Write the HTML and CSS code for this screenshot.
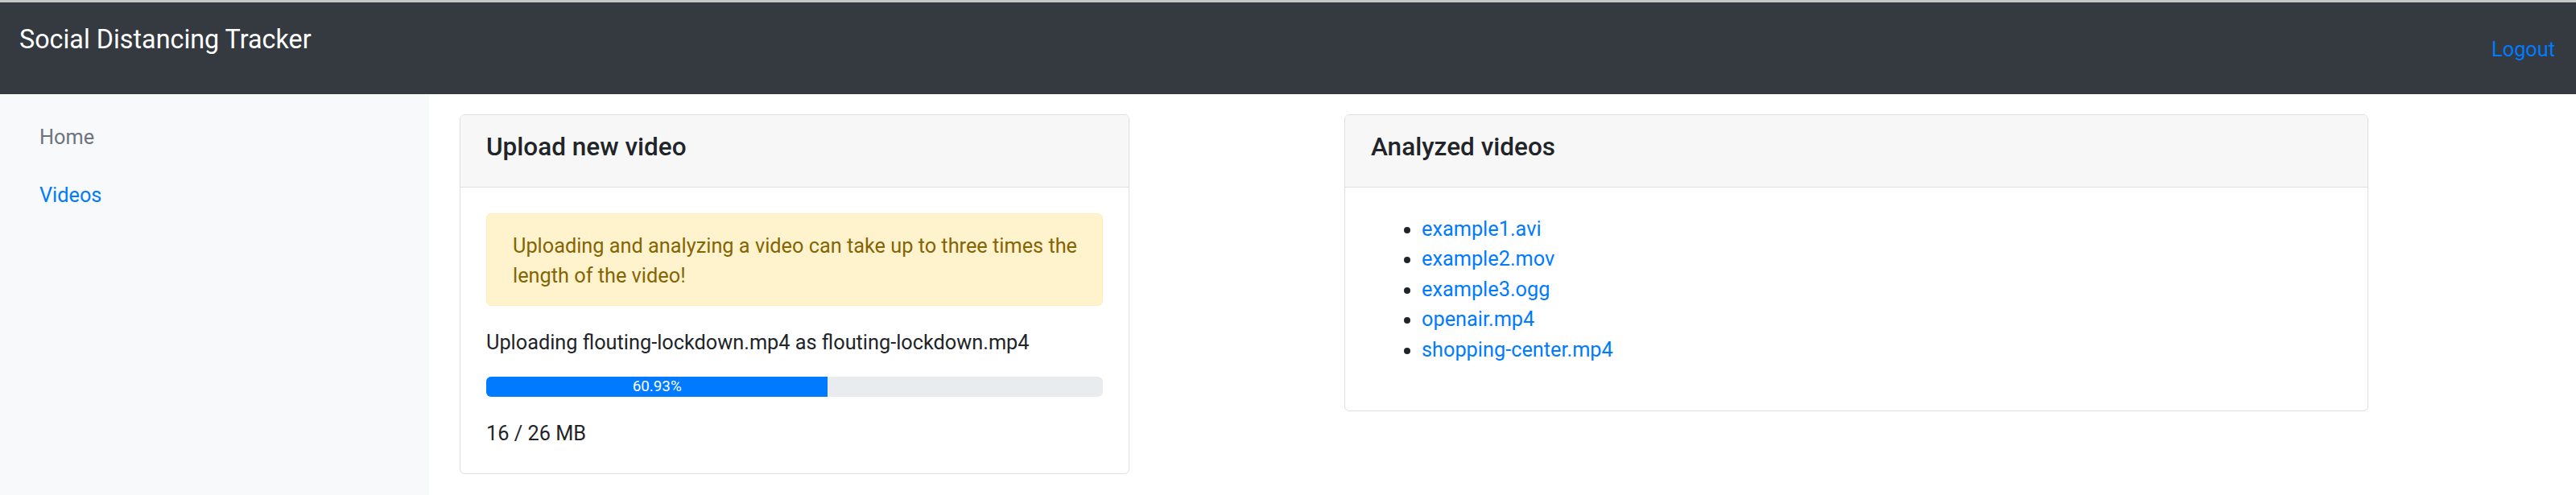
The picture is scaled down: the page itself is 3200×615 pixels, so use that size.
FILE: index.html
```html
<!DOCTYPE html>
<html lang="en">
<head>
<meta charset="utf-8">
<title>Social Distancing Tracker</title>
<link rel="stylesheet" href="styles.css">
</head>
<body>
<div class="topline"></div>
<nav class="navbar">
  <a class="brand" href="#">Social Distancing Tracker</a>
  <a class="logout" href="#">Logout</a>
</nav>
<div class="layout">
  <aside class="sidebar">
    <a class="side-link" href="#">Home</a>
    <a class="side-link active" href="#">Videos</a>
  </aside>
  <main class="main">
    <section class="card card-upload">
      <div class="card-header"><h5 class="card-title">Upload new video</h5></div>
      <div class="card-body">
        <div class="alert">Uploading and analyzing a video can take up to three times the length of the video!</div>
        <p class="status">Uploading flouting-lockdown.mp4 as flouting-lockdown.mp4</p>
        <div class="progress"><div class="progress-bar" style="width: 55.4%">60.93%</div></div>
        <p class="size">16 / 26 MB</p>
      </div>
    </section>
    <section class="card card-list">
      <div class="card-header"><h5 class="card-title">Analyzed videos</h5></div>
      <div class="card-body">
        <ul class="videos">
          <li><a href="#">example1.avi</a></li>
          <li><a href="#">example2.mov</a></li>
          <li><a href="#">example3.ogg</a></li>
          <li><a href="#">openair.mp4</a></li>
          <li><a href="#">shopping-center.mp4</a></li>
        </ul>
      </div>
    </section>
  </main>
</div>
</body>
</html>
```
FILE: styles.css
```css
* { box-sizing: border-box; }
html, body { margin: 0; padding: 0; }
body {
  font-family: Roboto, "Liberation Sans", sans-serif;
  font-size: 25.3px;
  line-height: 37.6px;
  color: #212529;
  background: #fff;
  height: 615px;
  overflow: hidden;
}
a { text-decoration: none; color: #007bff; }

.topline { height: 3px; background: #c6c7c8; }

.navbar {
  height: 114px;
  background: #343a40;
  display: flex;
  justify-content: space-between;
  align-items: flex-start;
  padding: 0 26px 0 24px;
}
.brand {
  color: #fff;
  font-size: 32.3px;
  line-height: 47px;
  margin-top: 23px;
}
.logout {
  line-height: 37.6px;
  margin-top: 40px;
}

.layout { display: flex; height: 498px; }
.sidebar {
  width: 533px;
  flex: none;
  background: #f8f9fa;
  padding: 18px 25px 0;
  display: flex;
  flex-direction: column;
  align-items: flex-start;
}
.side-link {
  display: block;
  padding: 17px 24px;
  line-height: 38px;
  color: #6c757d;
}
.side-link.active { color: #007bff; }

.main {
  flex: 1;
  display: flex;
  align-items: flex-start;
  padding: 25px 0 0 38px;
  gap: 267px;
}
.card {
  border: 1px solid #dfdfdf;
  border-radius: 6px;
  background: #fff;
  overflow: hidden;
}
.card-upload { width: 832px; }
.card-list { width: 1272px; }
.card-header {
  background: #f7f7f7;
  border-bottom: 1px solid #dfdfdf;
  padding: 21px 32px 30px;
}
.card-title {
  margin: 0;
  font-size: 31.5px;
  line-height: 37.6px;
  font-weight: 500;
}
.card-body { padding: 32px 32px 30px; }

.alert {
  background: #fff3cd;
  border: 1px solid #ffeeba;
  border-radius: 6px;
  color: #856404;
  padding: 21px 20px 17px 32px;
  margin-bottom: 27px;
}
.status { margin: 0 0 24px; }
.progress {
  height: 25px;
  background: #e9ecef;
  border-radius: 6px;
  overflow: hidden;
  display: flex;
  margin-bottom: 27px;
}
.progress-bar {
  background: #007bff;
  color: #fff;
  font-size: 18.8px;
  line-height: 25px;
  text-align: center;
  white-space: nowrap;
}
.size { margin: 0; }

.card-list .card-body { padding-top: 33px; padding-bottom: 32px; }
.videos {
  margin: 0 0 24px;
  padding-left: 63px;
}
```
